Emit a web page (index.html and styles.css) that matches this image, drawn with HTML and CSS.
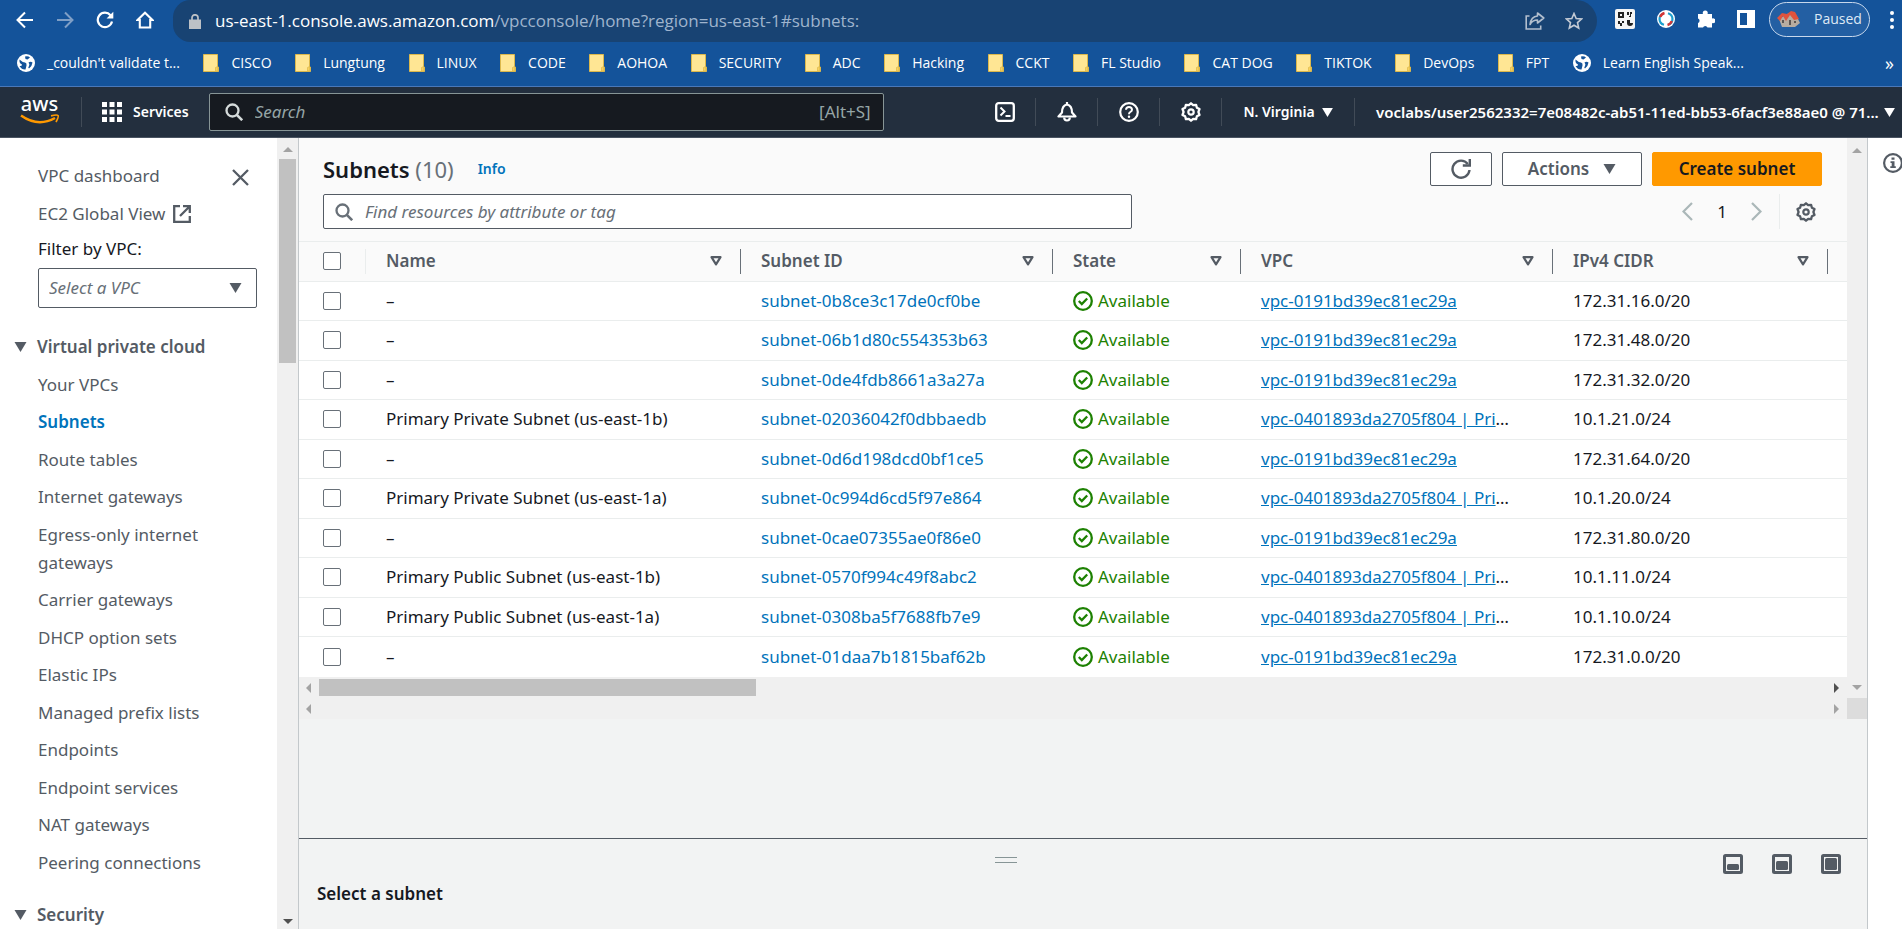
FILE: index.html
```html
<!DOCTYPE html>
<html lang="en">
<head>
<meta charset="utf-8">
<title>Subnets | VPC Management Console</title>
<link rel="stylesheet" href="styles.css">
</head>
<body>
<svg class="sprite" aria-hidden="true">
  <symbol id="i-globe" viewBox="0 0 18 18"><circle cx="9" cy="9" r="9" fill="#fff"/><path d="M2.500 5.500Q5 8 8 8.500q2 .5 1.500 3L8.500 15.500Q5 16 2.500 12Q5 12.500 5 10.500Q2 9.500 2.500 5.500zM8 2.500q3-1 5 1L10.500 5.500 8.500 5zM11.500 8.500q2-1.500 4 0-.500 4-3.500 6-1.500-1 0-2.500 1-2-.500-3.500z" fill="#14539a"/></symbol>
  <symbol id="i-folder" viewBox="0 0 16 18"><path d="M.5.500h14v12.500h1v4.500H.500z" fill="#ffe694" stroke="#dcb84c"/><path d="M12.500 17v-3.500l2-1v4.500z" fill="#f9d35c" stroke="#dcb84c" stroke-width=".7"/></symbol>
  <symbol id="i-tri" viewBox="0 0 12 10"><path d="M0 0h12L6 10z" fill="currentColor"/></symbol>
  <symbol id="i-filter" viewBox="0 0 12 10"><path d="M1.500 1.200h9L6 8.300z" fill="none" stroke="currentColor" stroke-width="2.200" stroke-linejoin="round"/></symbol>
  <symbol id="i-search" viewBox="0 0 18 18"><circle cx="7.500" cy="7.500" r="6" fill="none" stroke="currentColor" stroke-width="2.300"/><path d="M11.800 11.800l5.400 5.400" stroke="currentColor" stroke-width="2.600"/></symbol>
  <symbol id="i-ok" viewBox="0 0 20 20"><circle cx="10" cy="10" r="8.800" fill="none" stroke="currentColor" stroke-width="2.300"/><path d="M5.800 10l3 3 5.400-5.500" fill="none" stroke="currentColor" stroke-width="2.300"/></symbol>
  <symbol id="i-gear" viewBox="0 0 20 20"><path d="M10 1.300L12.200 3.200 15.100 2.900 15.900 5.700 18.500 7.100 17.400 10 18.500 12.900 15.900 14.300 15.100 17.100 12.200 16.800 10 18.700 7.800 16.800 4.900 17.100 4.100 14.300 1.500 12.900 2.600 10 1.500 7.100 4.100 5.700 4.900 2.900 7.800 3.200z" fill="none" stroke="currentColor" stroke-width="2.300" stroke-linejoin="round"/><circle cx="10" cy="10" r="2.700" fill="none" stroke="currentColor" stroke-width="2.200"/></symbol>
  <symbol id="i-refresh" viewBox="0 0 20 20"><path d="M18.500 11a8.500 8.500 0 1 1-1.700-6" fill="none" stroke="currentColor" stroke-width="2.400"/><path d="M18.800 0v6.500h-7" fill="none" stroke="currentColor" stroke-width="2.400"/></symbol>
  <symbol id="i-up" viewBox="0 0 10 5"><path d="M0 5h10L5 0z" fill="currentColor"/></symbol>
  <symbol id="i-down" viewBox="0 0 10 5"><path d="M0 0h10L5 5z" fill="currentColor"/></symbol>
  <symbol id="i-left" viewBox="0 0 5 10"><path d="M5 0v10L0 5z" fill="currentColor"/></symbol>
  <symbol id="i-right" viewBox="0 0 5 10"><path d="M0 0v10l5-5z" fill="currentColor"/></symbol>
</svg>

<header class="browser">
  <div class="toolbar">
    <div class="history">
      <button aria-label="Back"><svg width="18" height="18" viewBox="0 0 18 18"><path d="M17 9H2M9 1.500L1.500 9 9 16.500" fill="none" stroke="#fff" stroke-width="2"/></svg></button>
      <button aria-label="Forward"><svg width="18" height="18" viewBox="0 0 18 18"><path d="M1 9h15M9 1.500L16.500 9 9 16.500" fill="none" stroke="#7f9fc6" stroke-width="2"/></svg></button>
      <button aria-label="Reload"><svg width="18" height="18" viewBox="0 0 18 18"><path d="M16 10.500A7.200 7.200 0 1 1 14.500 4.300" fill="none" stroke="#fff" stroke-width="2.200"/><path d="M17.300.8v6.700h-6.700z" fill="#fff"/></svg></button>
      <button aria-label="Home"><svg width="18" height="18" viewBox="0 0 18 18"><path d="M3.800 16.500V9H1.500L9 1.800 16.500 9h-2.300v7.500z" fill="none" stroke="#fff" stroke-width="2.100"/></svg></button>
    </div>
    <div class="address">
      <svg width="12" height="15" viewBox="0 0 12 15"><path d="M0 5.500h12V15H0z" fill="#bdc1c6"/><path d="M3 6V3.800a3 3 0 0 1 6 0V6" fill="none" stroke="#bdc1c6" stroke-width="1.700"/></svg>
      <span class="url">us-east-1.console.aws.amazon.com<span class="path">/vpcconsole/home?region=us-east-1#subnets:</span></span>
      <button aria-label="Share"><svg width="20" height="18" viewBox="0 0 20 18"><path d="M4.500 4H1.200v13h14.500v-3.500" fill="none" stroke="#b3bfce" stroke-width="1.600"/><path d="M12.500 1l6.300 5-6.300 5V8Q7.500 8 5 12.500 6 4.500 12.500 4z" fill="none" stroke="#b3bfce" stroke-width="1.600" stroke-linejoin="round"/></svg></button>
      <button aria-label="Bookmark"><svg width="18" height="18" viewBox="0 0 18 18"><path d="M9 1.500l2.200 5 5.300.5-4 3.600 1.200 5.400L9 13.200 4.300 16l1.200-5.400-4-3.600 5.300-.5z" fill="none" stroke="#c3cad4" stroke-width="1.600"/></svg></button>
    </div>
    <div class="extensions">
      <svg width="20" height="20" viewBox="0 0 20 20"><rect width="20" height="20" rx="2" fill="#f5f5f5"/><path d="M3 3h6v6H3zM12 3h2v3h-2zM15 3h2v2h-1v3h-2V7h1zM3 12h2v2h2v-2h2v2H7v3H5v-2H3zM12 11h3v3h3a3 3 0 1 1-6 0z" fill="#222"/><path d="M5 5h2v2H5z" fill="#f5f5f5"/></svg>
      <svg width="18" height="18" viewBox="0 0 18 18"><circle cx="9" cy="9" r="9" fill="#fff"/><path d="M7 3.200a6 6 0 0 0 0 11.600" fill="none" stroke="#1c9fce" stroke-width="2.200"/><path d="M11 14.800a6 6 0 0 0 0-11.600" fill="none" stroke="#1c9fce" stroke-width="2.200"/><path d="M7.500 3a6 6 0 0 0-4.200 4M10.500 15a6 6 0 0 0 4.200-4" fill="none" stroke="#d63434" stroke-width="2.400"/></svg>
      <svg width="18" height="18" viewBox="0 0 18 18"><path d="M1 4h5a2.500 2.500 0 1 1 4.500 0H15v4.500a2.500 2.500 0 1 1 0 4.500v4.500h-4.500a2.400 2.400 0 0 0-4.500 0H1V13a2.400 2.400 0 0 0 0-4.500z" fill="#fff"/></svg>
      <svg width="18" height="18" viewBox="0 0 18 18"><path d="M0 0h18v18H0zM3 3v12h7V3z" fill="#fff" fill-rule="evenodd"/></svg>
    </div>
    <button class="profile"><svg width="25" height="18" viewBox="0 0 25 18"><path d="M2 9l3 8h13l5-4-3-6-8-4z" fill="#b7aca0"/><path d="M0 8l5-5 5 1 4-3 4 1 4 7-5 1-4-5-4 6-3-5-3 5z" fill="#e0533d"/><path d="M5 10h2v3H5zM12 10h2v5h-2zM17 11h2v2h-2z" fill="#5b5654"/></svg>Paused</button>
    <button class="kebab" aria-label="Menu"><svg width="4" height="18" viewBox="0 0 4 18"><g fill="#fff"><circle cx="2" cy="2" r="2"/><circle cx="2" cy="9" r="2"/><circle cx="2" cy="16" r="2"/></g></svg></button>
  </div>
  <nav class="bookmarks">
    <div class="marks">
      <a href="#" class="site"><svg width="18" height="18"><use href="#i-globe"/></svg>_couldn't validate t...</a>
      <a href="#"><svg width="16" height="18"><use href="#i-folder"/></svg>CISCO</a>
      <a href="#"><svg width="16" height="18"><use href="#i-folder"/></svg>Lungtung</a>
      <a href="#"><svg width="16" height="18"><use href="#i-folder"/></svg>LINUX</a>
      <a href="#"><svg width="16" height="18"><use href="#i-folder"/></svg>CODE</a>
      <a href="#"><svg width="16" height="18"><use href="#i-folder"/></svg>AOHOA</a>
      <a href="#"><svg width="16" height="18"><use href="#i-folder"/></svg>SECURITY</a>
      <a href="#"><svg width="16" height="18"><use href="#i-folder"/></svg>ADC</a>
      <a href="#"><svg width="16" height="18"><use href="#i-folder"/></svg>Hacking</a>
      <a href="#"><svg width="16" height="18"><use href="#i-folder"/></svg>CCKT</a>
      <a href="#"><svg width="16" height="18"><use href="#i-folder"/></svg>FL Studio</a>
      <a href="#"><svg width="16" height="18"><use href="#i-folder"/></svg>CAT DOG</a>
      <a href="#"><svg width="16" height="18"><use href="#i-folder"/></svg>TIKTOK</a>
      <a href="#"><svg width="16" height="18"><use href="#i-folder"/></svg>DevOps</a>
      <a href="#"><svg width="16" height="18"><use href="#i-folder"/></svg>FPT</a>
      <a href="#" class="site"><svg width="18" height="18"><use href="#i-globe"/></svg>Learn English Speak...</a>
    </div>
    <button class="more" aria-label="More bookmarks">»</button>
  </nav>
</header>

<div class="awsnav">
  <a href="#" class="logo" aria-label="AWS home"><span>aws</span><svg width="40" height="11" viewBox="0 0 40 11"><path d="M1 1.500Q18 13.500 35 4" fill="none" stroke="#f90" stroke-width="2.400"/><path d="M31 1.800q6-1.300 7-.3t-2 6.500" fill="none" stroke="#f90" stroke-width="1.700"/></svg></a>
  <button class="services"><svg width="20" height="20" viewBox="0 0 20 20"><path d="M0 0h5v5H0zM7.500 0h5v5h-5zM15 0h5v5h-5zM0 7.500h5v5H0zM7.500 7.500h5v5h-5zM15 7.500h5v5h-5zM0 15h5v5H0zM7.500 15h5v5h-5zM15 15h5v5h-5z" fill="#fff"/></svg>Services</button>
  <label class="globalsearch"><svg width="18" height="18"><use href="#i-search"/></svg><input type="search" placeholder="Search" aria-label="Search services"><span>[Alt+S]</span></label>
  <div class="tools">
    <button aria-label="CloudShell"><svg width="20" height="20" viewBox="0 0 20 20"><rect x="1.200" y="1.200" width="17.600" height="17.600" rx="2.500" fill="none" stroke="#fff" stroke-width="2.300"/><path d="M5.500 5.500l4 4-4 4M10.500 14h5" fill="none" stroke="#fff" stroke-width="2"/></svg></button>
    <button aria-label="Notifications"><svg width="20" height="20" viewBox="0 0 20 20"><path d="M1.500 14.500h17l-3.500-4Q15 3.500 10 2.500 5 3.500 5 10.500z" fill="none" stroke="#fff" stroke-width="2.200" stroke-linejoin="round"/><path d="M10 0v3M7.200 15.500a2.800 3 0 0 0 5.600 0" fill="none" stroke="#fff" stroke-width="2.200"/></svg></button>
    <button aria-label="Help"><svg width="20" height="20" viewBox="0 0 20 20"><circle cx="10" cy="10" r="8.800" fill="none" stroke="#fff" stroke-width="2.200"/><path d="M7 7.800Q7.200 5 10 5t3 2.700Q13 9 11.300 10 10 10.800 10 12.200" fill="none" stroke="#fff" stroke-width="2"/><circle cx="10" cy="14.800" r="1.200" fill="#fff"/></svg></button>
    <button aria-label="Settings"><svg width="20" height="20"><use href="#i-gear"/></svg></button>
    <button class="region">N. Virginia<svg width="11" height="9"><use href="#i-tri"/></svg></button>
    <button class="account"><span>voclabs/user2562332=7e08482c-ab51-11ed-bb53-6facf3e88ae0 @ 71...</span><svg width="11" height="9"><use href="#i-tri"/></svg></button>
  </div>
</div>

<div class="workspace">
  <aside class="sidebar">
    <nav class="sidenav">
      <div class="top">
        <ul class="quick">
          <li><a href="#">VPC dashboard</a></li>
          <li><a href="#">EC2 Global View<svg width="18" height="18" viewBox="0 0 18 18"><path d="M7 1.200H1.200v15.600h15.600V11M10 1.200h6.800V8M16.500 1.500L7 11" fill="none" stroke="#545b64" stroke-width="2.300"/></svg></a></li>
        </ul>
        <button class="close" aria-label="Close navigation"><svg width="17" height="17" viewBox="0 0 17 17"><path d="M1 1l15 15M16 1L1 16" stroke="#545b64" stroke-width="2.300"/></svg></button>
      </div>
      <label class="filterlabel" for="vpcfilter">Filter by VPC:</label>
      <div class="selectwrap"><select id="vpcfilter"><option>Select a VPC</option></select><svg width="13" height="10"><use href="#i-tri"/></svg></div>
      <button class="group"><svg width="13" height="10"><use href="#i-tri"/></svg>Virtual private cloud</button>
      <ul class="links">
        <li><a href="#">Your VPCs</a></li>
        <li><a href="#" class="current">Subnets</a></li>
        <li><a href="#">Route tables</a></li>
        <li><a href="#">Internet gateways</a></li>
        <li><a href="#">Egress-only internet gateways</a></li>
        <li><a href="#">Carrier gateways</a></li>
        <li><a href="#">DHCP option sets</a></li>
        <li><a href="#">Elastic IPs</a></li>
        <li><a href="#">Managed prefix lists</a></li>
        <li><a href="#">Endpoints</a></li>
        <li><a href="#">Endpoint services</a></li>
        <li><a href="#">NAT gateways</a></li>
        <li><a href="#">Peering connections</a></li>
      </ul>
      <button class="group"><svg width="13" height="10"><use href="#i-tri"/></svg>Security</button>
    </nav>
    <div class="vbar"><svg width="10" height="5"><use href="#i-up"/></svg><div class="thumb"></div><svg class="active" width="10" height="5"><use href="#i-down"/></svg></div>
  </aside>

  <main class="main">
    <div class="frame">
      <section class="content">
        <div class="head">
          <div class="titlerow">
            <h1>Subnets <span>(10)</span></h1>
            <a href="#" class="info">Info</a>
            <div class="actions">
              <button class="btn refresh" aria-label="Refresh"><svg width="20" height="20"><use href="#i-refresh"/></svg></button>
              <button class="btn menu">Actions<svg width="13" height="10"><use href="#i-tri"/></svg></button>
              <button class="btn primary">Create subnet</button>
            </div>
          </div>
          <div class="filterrow">
            <label class="find"><svg width="18" height="18"><use href="#i-search"/></svg><input type="text" placeholder="Find resources by attribute or tag" aria-label="Find resources"></label>
            <div class="pager">
              <button aria-label="Previous page"><svg width="11" height="19" viewBox="0 0 11 19"><path d="M10 1L1.500 9.500 10 18" fill="none" stroke="#aab7b8" stroke-width="2.200"/></svg></button>
              <span>1</span>
              <button aria-label="Next page"><svg width="11" height="19" viewBox="0 0 11 19"><path d="M1 1l8.500 8.500L1 18" fill="none" stroke="#aab7b8" stroke-width="2.200"/></svg></button>
              <button class="prefs" aria-label="Preferences"><svg width="20" height="20"><use href="#i-gear"/></svg></button>
            </div>
          </div>
        </div>
        <table class="subnets">
          <colgroup><col class="c-check"><col class="c-name"><col class="c-id"><col class="c-state"><col class="c-vpc"><col class="c-cidr"><col class="c-rest"></colgroup>
          <thead><tr>
            <th class="pick"><div><input type="checkbox" aria-label="Select all"></div></th>
            <th><div>Name<svg width="12" height="10"><use href="#i-filter"/></svg></div></th>
            <th><div>Subnet ID<svg width="12" height="10"><use href="#i-filter"/></svg></div></th>
            <th><div>State<svg width="12" height="10"><use href="#i-filter"/></svg></div></th>
            <th><div>VPC<svg width="12" height="10"><use href="#i-filter"/></svg></div></th>
            <th><div>IPv4 CIDR<svg width="12" height="10"><use href="#i-filter"/></svg></div></th>
            <th></th>
          </tr></thead>
          <tbody>
            <tr><td class="pick"><input type="checkbox" aria-label="Select row"></td><td>–</td><td><a href="#">subnet-0b8ce3c17de0cf0be</a></td><td><span class="ok"><svg width="20" height="20"><use href="#i-ok"/></svg>Available</span></td><td class="vpc"><a href="#">vpc-0191bd39ec81ec29a</a></td><td>172.31.16.0/20</td><td></td></tr>
            <tr><td class="pick"><input type="checkbox" aria-label="Select row"></td><td>–</td><td><a href="#">subnet-06b1d80c554353b63</a></td><td><span class="ok"><svg width="20" height="20"><use href="#i-ok"/></svg>Available</span></td><td class="vpc"><a href="#">vpc-0191bd39ec81ec29a</a></td><td>172.31.48.0/20</td><td></td></tr>
            <tr><td class="pick"><input type="checkbox" aria-label="Select row"></td><td>–</td><td><a href="#">subnet-0de4fdb8661a3a27a</a></td><td><span class="ok"><svg width="20" height="20"><use href="#i-ok"/></svg>Available</span></td><td class="vpc"><a href="#">vpc-0191bd39ec81ec29a</a></td><td>172.31.32.0/20</td><td></td></tr>
            <tr><td class="pick"><input type="checkbox" aria-label="Select row"></td><td>Primary Private Subnet (us-east-1b)</td><td><a href="#">subnet-02036042f0dbbaedb</a></td><td><span class="ok"><svg width="20" height="20"><use href="#i-ok"/></svg>Available</span></td><td class="vpc"><a href="#">vpc-0401893da2705f804 | Pri</a>…</td><td>10.1.21.0/24</td><td></td></tr>
            <tr><td class="pick"><input type="checkbox" aria-label="Select row"></td><td>–</td><td><a href="#">subnet-0d6d198dcd0bf1ce5</a></td><td><span class="ok"><svg width="20" height="20"><use href="#i-ok"/></svg>Available</span></td><td class="vpc"><a href="#">vpc-0191bd39ec81ec29a</a></td><td>172.31.64.0/20</td><td></td></tr>
            <tr><td class="pick"><input type="checkbox" aria-label="Select row"></td><td>Primary Private Subnet (us-east-1a)</td><td><a href="#">subnet-0c994d6cd5f97e864</a></td><td><span class="ok"><svg width="20" height="20"><use href="#i-ok"/></svg>Available</span></td><td class="vpc"><a href="#">vpc-0401893da2705f804 | Pri</a>…</td><td>10.1.20.0/24</td><td></td></tr>
            <tr><td class="pick"><input type="checkbox" aria-label="Select row"></td><td>–</td><td><a href="#">subnet-0cae07355ae0f86e0</a></td><td><span class="ok"><svg width="20" height="20"><use href="#i-ok"/></svg>Available</span></td><td class="vpc"><a href="#">vpc-0191bd39ec81ec29a</a></td><td>172.31.80.0/20</td><td></td></tr>
            <tr><td class="pick"><input type="checkbox" aria-label="Select row"></td><td>Primary Public Subnet (us-east-1b)</td><td><a href="#">subnet-0570f994c49f8abc2</a></td><td><span class="ok"><svg width="20" height="20"><use href="#i-ok"/></svg>Available</span></td><td class="vpc"><a href="#">vpc-0401893da2705f804 | Pri</a>…</td><td>10.1.11.0/24</td><td></td></tr>
            <tr><td class="pick"><input type="checkbox" aria-label="Select row"></td><td>Primary Public Subnet (us-east-1a)</td><td><a href="#">subnet-0308ba5f7688fb7e9</a></td><td><span class="ok"><svg width="20" height="20"><use href="#i-ok"/></svg>Available</span></td><td class="vpc"><a href="#">vpc-0401893da2705f804 | Pri</a>…</td><td>10.1.10.0/24</td><td></td></tr>
            <tr><td class="pick"><input type="checkbox" aria-label="Select row"></td><td>–</td><td><a href="#">subnet-01daa7b1815baf62b</a></td><td><span class="ok"><svg width="20" height="20"><use href="#i-ok"/></svg>Available</span></td><td class="vpc"><a href="#">vpc-0191bd39ec81ec29a</a></td><td>172.31.0.0/20</td><td></td></tr>
          </tbody>
        </table>
        <div class="hbar"><svg width="5" height="10"><use href="#i-left"/></svg><div class="track"><div class="thumb"></div></div><svg class="active" width="5" height="10"><use href="#i-right"/></svg></div>
      </section>
      <div class="vbar"><svg width="10" height="5"><use href="#i-up"/></svg><svg width="10" height="5"><use href="#i-down"/></svg></div>
      <div class="hbar"><svg width="5" height="10"><use href="#i-left"/></svg><svg width="5" height="10"><use href="#i-right"/></svg></div>
      <div class="corner"></div>
    </div>
    <section class="split">
      <div class="splitbar">
        <div class="griparea"><div class="grip"></div></div>
        <div class="sizes">
          <button aria-label="Small panel"><svg width="20" height="20" viewBox="0 0 20 20"><rect x="1.500" y="1.500" width="17" height="17" rx="1" fill="none" stroke="#545b64" stroke-width="3"/><rect x="4" y="10" width="12" height="6" rx="1.500" fill="#545b64"/></svg></button>
          <button aria-label="Medium panel"><svg width="20" height="20" viewBox="0 0 20 20"><rect x="1.500" y="1.500" width="17" height="17" rx="1" fill="none" stroke="#545b64" stroke-width="3"/><rect x="4" y="7" width="12" height="9" rx="1.500" fill="#545b64"/></svg></button>
          <button aria-label="Full panel"><svg width="20" height="20" viewBox="0 0 20 20"><rect x="1.500" y="1.500" width="17" height="17" rx="1" fill="none" stroke="#545b64" stroke-width="3"/><rect x="4" y="4" width="12" height="12" rx="1.500" fill="#545b64"/></svg></button>
        </div>
      </div>
      <h2>Select a subnet</h2>
    </section>
  </main>

  <aside class="helprail"><button aria-label="Open help"><svg width="20" height="20" viewBox="0 0 20 20"><circle cx="10" cy="10" r="8.900" fill="none" stroke="#545b64" stroke-width="2.200"/><path d="M8.500 4.500h3v2.300h-3zM7.500 8.200h4v5h1.300v1.800H7.300v-1.800h1.400v-3.200H7.500z" fill="#545b64"/></svg></button></aside>
</div>
</body>
</html>
```

FILE: styles.css
```css
* { box-sizing: border-box; }
html, body { height: 100%; }
body {
  margin: 0;
  display: flex;
  flex-direction: column;
  overflow: hidden;
  background: #fff;
  color: #16191f;
  font-family: "Noto Sans", "Open Sans", sans-serif;
  font-size: 17px;
  line-height: 28px;
}
button, input, select { font: inherit; color: inherit; }
button { padding: 0; border: 0; background: none; display: flex; align-items: center; justify-content: center; }
svg { flex: none; display: block; }
a { color: #0073bb; text-decoration: none; }
ul { list-style: none; margin: 0; padding: 0; }
.sprite { position: absolute; width: 0; height: 0; }

/* Browser chrome */
.browser { background: #14539a; color: #fff; border-bottom: 1px solid #4a78b8; font-family: "Open Sans", "Noto Sans", sans-serif; }
.toolbar { display: flex; height: 42px; align-items: center; padding-right: 8px; }
.history { display: flex; gap: 22px; padding: 0 19px 2px 16px; }
.history button { width: 18px; }
.address { flex: 1; display: flex; align-items: center; gap: 20px; height: 42px; padding: 0 14px 0 16px; background: #184373; border-radius: 20px 24px 24px 20px; font-size: 17px; }
.url { flex: 1; white-space: nowrap; margin-left: -6px; }
.path { color: #9fb4cd; }
.extensions { display: flex; gap: 22px; align-items: center; padding: 0 14px 4px 18px; }
.profile { gap: 12px; height: 35px; width: 101px; border: 1px solid #c8d8ec; border-radius: 18px; background: #235fa3; font-size: 14px; color: #dfe9f5; margin-bottom: 4px; }
.kebab { width: 4px; margin-left: 20px; margin-bottom: 2px; }
.bookmarks { display: flex; height: 44px; align-items: center; justify-content: space-between; padding: 0 8px 2px 17px; font-size: 14px; }
.marks { display: flex; width: 92%; justify-content: space-between; }
.marks a { display: flex; align-items: center; gap: 12px; color: #fff; white-space: nowrap; }
.more { font-size: 18px; }

/* AWS navigation */
.awsnav { display: flex; align-items: center; height: 51px; background: #232f3e; border-bottom: 1px solid #4a5462; color: #fff; font-size: 14px; font-weight: 600; }
.logo { display: flex; flex-direction: column; align-items: center; width: 82px; border-right: 1px solid #414b57; padding: 0 2px 2px 0; color: #fff; font-size: 20px; font-weight: 500; line-height: 14px; }
.logo span { height: 17px; }
.services { gap: 11px; padding: 0 20px; }
.globalsearch { display: flex; align-items: center; width: 675px; height: 38px; padding: 0 12px 0 15px; gap: 12px; border: 1px solid #879596; border-radius: 2px; background: #161a20; font-size: 17px; font-weight: 400; color: #95a5a6; }
.globalsearch svg { color: #d5dbdb; }
.globalsearch input { flex: 1; min-width: 0; border: 0; padding: 0; background: none; outline: none; }
.globalsearch input::placeholder { color: #95a5a6; font-style: italic; }
.tools { margin-left: auto; display: flex; align-items: center; padding-right: 7px; }
.tools button { height: 28px; width: 62px; border-right: 1px solid #414b57; white-space: nowrap; }
.tools .region { width: 133px; gap: 7px; }
.tools .account { width: 540px; padding-left: 21px; border: 0; justify-content: space-between; font-size: 15px; }

/* Workspace columns */
.workspace { flex: 1; min-height: 0; display: flex; }
.sidebar { width: 299px; display: flex; border-right: 1px solid #c3c8cb; }
.sidenav { flex: 1; overflow: hidden; padding: 24px 20px 0 14px; color: #545b64; }
.top { display: flex; justify-content: space-between; align-items: flex-start; padding: 0 8px 0 24px; }
.quick li { margin-bottom: 10px; }
.sidenav a { color: #545b64; display: flex; align-items: center; gap: 8px; }
.close { height: 30px; }
.filterlabel { display: block; margin: -3px 0 5px 24px; color: #16191f; }
.selectwrap { display: flex; align-items: center; margin: 0 0 25px 24px; height: 40px; border: 1px solid #545b64; border-radius: 2px; padding-right: 14px; }
.selectwrap select { flex: 1; appearance: none; border: 0; background: none; padding: 0 10px; height: 36px; font-style: italic; color: #687078; outline: none; }
.group { font-weight: 600; color: #545b64; gap: 10px; margin-bottom: 10px; }
.links { padding: 0 20px 15px 24px; }
.links li { margin-bottom: 9px; }
.links li:nth-child(even) { margin-bottom: 10px; }
.sidenav .current { color: #0073bb; font-weight: 600; }

/* Scroll bars */
.vbar { width: 21px; background: #f0f0f0; display: flex; flex-direction: column; align-items: center; justify-content: space-between; padding: 9px 0 6px; color: #a3a3a3; }
.sidebar .vbar { padding-bottom: 5px; }
.vbar .thumb { width: 17px; height: 204px; margin: 7px 0 auto; background: #c1c1c1; }
.hbar { height: 21px; background: #f0f0f0; display: flex; align-items: center; justify-content: space-between; gap: 8px; padding: 0 8px 0 7px; color: #a3a3a3; }
.hbar .track { flex: 1; }
.hbar .thumb { width: 29%; height: 17px; background: #c1c1c1; }
.vbar .active, .hbar .active { color: #505050; }
.corner { background: #dcdcdc; }

/* Main */
.main { flex: 1; min-width: 0; display: flex; flex-direction: column; background: #f2f3f3; border-right: 1px solid #c3c8cb; }
.frame { display: grid; grid-template-columns: minmax(0, 1fr) 20px; margin-bottom: auto; }
.frame > .vbar { width: 20px; padding-bottom: 8px; padding-top: 10px; }
.head { background: #fafafa; padding: 14px 25px 12px 24px; border-bottom: 1px solid #eaeded; }
.titlerow { display: flex; align-items: center; height: 34px; margin-bottom: 8px; }
h1 { margin: 0; font-size: 22px; font-weight: 600; line-height: 34px; }
h1 span { font-weight: 400; color: #687078; }
.info { margin-left: 24px; font-size: 14px; font-weight: 600; }
.actions { display: flex; gap: 10px; margin-left: auto; }
.btn { height: 34px; border: 1px solid #545b64; border-radius: 2px; background: #fff; color: #545b64; font-weight: 600; }
.refresh { width: 62px; }
.menu { width: 140px; gap: 14px; }
.primary { width: 170px; background: #f90; border-color: #f90; color: #16191f; }
.filterrow { display: flex; justify-content: space-between; align-items: center; }
.find { display: flex; align-items: center; gap: 12px; flex: 0 0 54%; height: 35px; padding: 0 11px; border: 1px solid #545b64; border-radius: 2px; background: #fff; color: #687078; }
.find input { flex: 1; border: 0; padding: 0; outline: none; background: none; }
.find input::placeholder { color: #687078; font-style: italic; opacity: 1; }
.pager { display: flex; align-items: center; gap: 24px; }
.pager .prefs { height: 35px; width: 43px; margin-left: -7px; padding-left: 9px; border-left: 1px solid #eaeded; color: #545b64; }

.subnets { width: 100%; table-layout: fixed; border-collapse: collapse; background: #fff; }
.c-check { width: 67px; }
.c-name { width: 375px; }
.c-id, .c-vpc { width: 312px; }
.c-state { width: 188px; }
.c-cidr { width: 275px; }
.subnets th { height: 39px; padding: 0; background: #fafafa; border-bottom: 1px solid #eaeded; color: #545b64; text-align: left; font-weight: 600; }
.subnets th div { display: flex; align-items: center; justify-content: space-between; height: 25px; padding: 0 18px 0 20px; border-right: 1px solid #687078; }
.subnets .pick div { padding-left: 24px; border-color: #eaeded; }
.subnets td { height: 39px; padding: 0 0 0 20px; border-bottom: 1px solid #eaeded; white-space: nowrap; line-height: 24px; }
.subnets tr:nth-child(even) td { height: 40px; }
.subnets tr:last-child td { height: 41px; border-bottom: 0; }
.subnets td.pick { padding-left: 24px; }
.vpc a { text-decoration: underline; }
.subnets input { appearance: none; display: block; width: 18px; height: 18px; margin: 0; border: 1px solid #687078; border-radius: 2px; background: #fff; }
.ok { display: flex; align-items: center; gap: 5px; color: #1d8102; }

/* Split panel */
.split { height: 91px; border-top: 1px solid #545b64; padding: 15px 26px 0 0; }
.splitbar { display: flex; align-items: center; gap: 10px; }
.griparea { flex: 1; display: flex; justify-content: center; align-self: flex-start; padding-top: 3px; }
.grip { width: 22px; height: 6px; border: solid #879596; border-width: 1px 0; }
.sizes { display: flex; gap: 29px; }
h2 { margin: 6px 0 0 18px; font-size: 17px; font-weight: 600; }

.helprail { width: 34px; overflow: hidden; padding: 15px 0 0 15px; }
```
